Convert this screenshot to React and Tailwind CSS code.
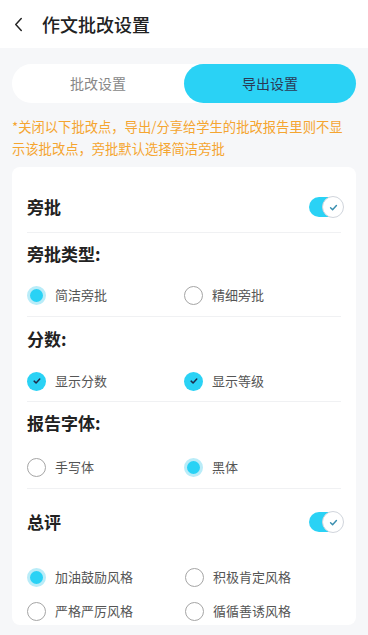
import { useState } from 'react';

const FONT = { fontFamily: '"Noto Sans CJK SC", "Noto Sans", sans-serif' };

function Toggle({ on, onChange }) {
  return (
    <button
      type="button"
      onClick={() => onChange(!on)}
      className={`relative h-[20px] w-[34px] rounded-full ${on ? 'bg-[#2ad2f5]' : 'bg-gray-300'}`}
    >
      <span
        className={`absolute top-[-1px] flex h-[22px] w-[22px] items-center justify-center rounded-full border border-gray-300 bg-white ${
          on ? 'right-[-1px]' : 'left-[-1px]'
        }`}
      >
        {on && (
          <svg viewBox="0 0 12 12" className="h-[11px] w-[11px]" fill="none" stroke="#3a8fb0" strokeWidth="1.6" strokeLinecap="round" strokeLinejoin="round">
            <path d="M2.8 6.3l2.2 2.1 4.2-4.6" />
          </svg>
        )}
      </span>
    </button>
  );
}

function Radio({ checked, label, onClick }) {
  return (
    <button type="button" onClick={onClick} className="flex h-[20px] w-[160px] items-center gap-[9px] text-left">
      {checked ? (
        <span className="flex h-[19px] w-[19px] items-center justify-center rounded-full border-[3px] border-[#b9ecf8] bg-[#2ad2f5]">
          <span className="h-[9px] w-[9px] rounded-full bg-[#2ad2f5]" />
        </span>
      ) : (
        <span className="h-[19px] w-[19px] rounded-full border-[1.5px] border-[#a5a5a5] bg-white" />
      )}
      <span className="text-[13px] text-[#555]">{label}</span>
    </button>
  );
}

function Check({ checked, label, onClick }) {
  return (
    <button type="button" onClick={onClick} className="flex h-[20px] w-[160px] items-center gap-[9px] text-left">
      <span className={`flex h-[19px] w-[19px] items-center justify-center rounded-full ${checked ? 'bg-[#2ad2f5]' : 'border-[1.5px] border-[#a5a5a5] bg-white'}`}>
        {checked && (
          <svg viewBox="0 0 12 12" className="h-[10px] w-[10px]" fill="none" stroke="#1d2b4a" strokeWidth="1.8" strokeLinecap="round" strokeLinejoin="round">
            <path d="M2.6 6.2l2.3 2.2 4.4-4.7" />
          </svg>
        )}
      </span>
      <span className="text-[13px] text-[#555]">{label}</span>
    </button>
  );
}

function Divider() {
  return <div className="mx-[15px] h-px bg-[#f0f1f3]" />;
}

export default function App() {
  const [tab, setTab] = useState('export');
  const [side, setSide] = useState(true);
  const [sideType, setSideType] = useState('simple');
  const [showScore, setShowScore] = useState(true);
  const [showGrade, setShowGrade] = useState(true);
  const [font, setFont] = useState('hei');
  const [summary, setSummary] = useState(true);
  const [style, setStyle] = useState('cheer');

  return (
    <div className="min-h-[635px] bg-[#f6f7f9]" style={FONT}>
      <div className="flex h-[48px] items-center bg-white">
        <svg viewBox="0 0 12 16" className="ml-[13px] h-[15px] w-[11px]" fill="none" stroke="#222" strokeWidth="1.6" strokeLinecap="round" strokeLinejoin="round">
          <path d="M9 1.5L3 8l6 6.5" />
        </svg>
        <span className="ml-[18px] text-[18px] font-medium text-[#222]">作文批改设置</span>
      </div>

      <div className="px-[12px] pt-[16px]">
        <div className="flex h-[39px] rounded-full bg-white">
          <button
            type="button"
            onClick={() => setTab('review')}
            className={`flex-1 rounded-full text-[14px] ${tab === 'review' ? 'bg-[#2ad2f5] text-[#2a3a55]' : 'text-[#888]'}`}
          >
            批改设置
          </button>
          <button
            type="button"
            onClick={() => setTab('export')}
            className={`flex-1 rounded-full text-[14px] ${tab === 'export' ? 'bg-[#2ad2f5] text-[#2a3a55]' : 'text-[#888]'}`}
          >
            导出设置
          </button>
        </div>

        <p className="mt-[13px] pr-[6px] text-[13.3px] leading-[22px] text-[#f5a530]">
          *关闭以下批改点，导出/分享给学生的批改报告里则不显示该批改点，旁批默认选择简洁旁批
        </p>

        <div className="mt-[7px] rounded-[8px] bg-white">
          <div className="flex items-center justify-between pl-[15px] pr-[13px] pt-[28px] pb-[13px]">
            <span className="text-[17px] font-bold leading-[24px] text-[#222]">旁批</span>
            <Toggle on={side} onChange={setSide} />
          </div>
          <Divider />

          <div className="px-[15px] pt-[9px] pb-[11px]">
            <div className="text-[17px] font-bold leading-[24px] text-[#222]">旁批类型:</div>
            <div className="mt-[19px] flex">
              <Radio checked={sideType === 'simple'} label="简洁旁批" onClick={() => setSideType('simple')} />
              <Radio checked={sideType === 'fine'} label="精细旁批" onClick={() => setSideType('fine')} />
            </div>
          </div>
          <Divider />

          <div className="px-[15px] pt-[10px] pb-[10px]">
            <div className="text-[17px] font-bold leading-[24px] text-[#222]">分数:</div>
            <div className="mt-[20px] flex">
              <Check checked={showScore} label="显示分数" onClick={() => setShowScore(!showScore)} />
              <Check checked={showGrade} label="显示等级" onClick={() => setShowGrade(!showGrade)} />
            </div>
          </div>
          <Divider />

          <div className="px-[15px] pt-[9px] pb-[11px]">
            <div className="text-[17px] font-bold leading-[24px] text-[#222]">报告字体:</div>
            <div className="mt-[22px] flex">
              <Radio checked={font === 'hand'} label="手写体" onClick={() => setFont('hand')} />
              <Radio checked={font === 'hei'} label="黑体" onClick={() => setFont('hei')} />
            </div>
          </div>
          <Divider />

          <div className="pl-[15px] pr-[13px] pt-[21px] pb-[4px]">
            <div className="flex items-center justify-between">
              <span className="text-[17px] font-bold leading-[24px] text-[#222]">总评</span>
              <Toggle on={summary} onChange={setSummary} />
            </div>
            <div className="mt-[33px] flex flex-col gap-[14px]">
              <div className="flex">
                <Radio checked={style === 'cheer'} label="加油鼓励风格" onClick={() => setStyle('cheer')} />
                <Radio checked={style === 'positive'} label="积极肯定风格" onClick={() => setStyle('positive')} />
              </div>
              <div className="flex">
                <Radio checked={style === 'strict'} label="严格严厉风格" onClick={() => setStyle('strict')} />
                <Radio checked={style === 'guide'} label="循循善诱风格" onClick={() => setStyle('guide')} />
              </div>
            </div>
          </div>
        </div>
      </div>
    </div>
  );
}
